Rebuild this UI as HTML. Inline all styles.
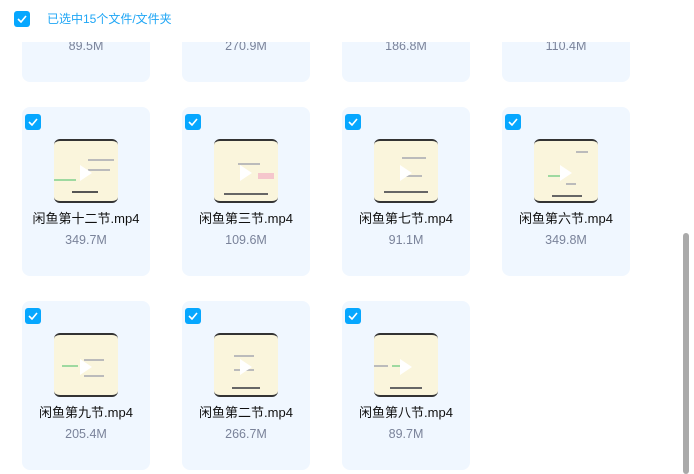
<!DOCTYPE html>
<html><head><meta charset="utf-8"><style>
*{margin:0;padding:0;box-sizing:border-box}
body{width:694px;height:474px;overflow:hidden;background:#fff;font-family:"Liberation Sans","Noto Sans CJK SC",sans-serif;position:relative}
.hdr{position:absolute;left:0;top:0;width:694px;height:42px;background:#fff;z-index:5}
.cb{position:absolute;width:16px;height:16px;border-radius:3px;background:#06a7ff}
.cb svg{position:absolute;left:3px;top:4px}
.htxt{position:absolute;left:47px;top:11px;font-size:12px;color:#1fa6f5;line-height:16px}
.card{position:absolute;width:128px;height:169px;background:#f0f7ff;border-radius:8px}
.card .cb{left:3px;top:7px}
.th{position:absolute;left:32px;top:32px;width:64px;height:64px;border-radius:6px;background:#faf5dc;overflow:hidden;border-top:2px solid #333;border-bottom:2px solid #333}
.th i{position:absolute;height:2px;background:#bbb}
.play{position:absolute;left:26px;top:24px;width:0;height:0;border-left:12px solid #fff;border-top:8px solid transparent;border-bottom:8px solid transparent}
.nm{position:absolute;left:0;width:128px;top:104px;text-align:center;font-size:13px;color:#111;line-height:16px}
.sz{position:absolute;left:0;width:128px;top:125px;text-align:center;font-size:12.5px;color:#7a839a;line-height:16px}
.sb{position:absolute;left:683px;top:233px;width:6px;height:241px;background:#aaa;border-radius:3px}
</style></head><body>
<div class="hdr"><div class="cb" style="left:14px;top:11px"><svg width="10" height="8"><path d="M1 4l3 3 5-6" stroke="#fff" stroke-width="1.6" fill="none"/></svg></div><div class="htxt">已选中15个文件/文件夹</div></div>

<div class="card" style="left:22px;top:-87px"><div class="sz">89.5M</div></div>
<div class="card" style="left:182px;top:-87px"><div class="sz">270.9M</div></div>
<div class="card" style="left:342px;top:-87px"><div class="sz">186.8M</div></div>
<div class="card" style="left:502px;top:-87px"><div class="sz">110.4M</div></div>

<div class="card" style="left:22px;top:107px"><div class="cb"><svg width="10" height="8"><path d="M1 4l3 3 5-6" stroke="#fff" stroke-width="1.6" fill="none"/></svg></div><div class="th"><i style="left:34px;top:18px;width:26px"></i><i style="left:34px;top:28px;width:22px"></i><i style="left:0;top:38px;width:22px;background:#9ed9a0"></i><i style="left:18px;top:50px;width:26px;background:#555"></i><div class="play"></div></div><div class="nm">闲鱼第十二节.mp4</div><div class="sz">349.7M</div></div>
<div class="card" style="left:182px;top:107px"><div class="cb"><svg width="10" height="8"><path d="M1 4l3 3 5-6" stroke="#fff" stroke-width="1.6" fill="none"/></svg></div><div class="th"><i style="left:24px;top:22px;width:22px"></i><i style="left:44px;top:32px;width:16px;height:6px;background:#f5c6cc"></i><i style="left:10px;top:52px;width:44px;background:#666"></i><div class="play"></div></div><div class="nm">闲鱼第三节.mp4</div><div class="sz">109.6M</div></div>
<div class="card" style="left:342px;top:107px"><div class="cb"><svg width="10" height="8"><path d="M1 4l3 3 5-6" stroke="#fff" stroke-width="1.6" fill="none"/></svg></div><div class="th"><i style="left:28px;top:16px;width:24px"></i><i style="left:28px;top:34px;width:20px"></i><i style="left:10px;top:50px;width:44px;background:#666"></i><div class="play"></div></div><div class="nm">闲鱼第七节.mp4</div><div class="sz">91.1M</div></div>
<div class="card" style="left:502px;top:107px"><div class="cb"><svg width="10" height="8"><path d="M1 4l3 3 5-6" stroke="#fff" stroke-width="1.6" fill="none"/></svg></div><div class="th"><i style="left:42px;top:10px;width:12px"></i><i style="left:14px;top:34px;width:12px;background:#9ed9a0"></i><i style="left:32px;top:42px;width:10px"></i><i style="left:18px;top:54px;width:30px;background:#666"></i><div class="play"></div></div><div class="nm">闲鱼第六节.mp4</div><div class="sz">349.8M</div></div>

<div class="card" style="left:22px;top:301px"><div class="cb"><svg width="10" height="8"><path d="M1 4l3 3 5-6" stroke="#fff" stroke-width="1.6" fill="none"/></svg></div><div class="th"><i style="left:8px;top:30px;width:16px;background:#9ed9a0"></i><i style="left:30px;top:24px;width:20px"></i><i style="left:30px;top:40px;width:20px"></i><div class="play"></div></div><div class="nm">闲鱼第九节.mp4</div><div class="sz">205.4M</div></div>
<div class="card" style="left:182px;top:301px"><div class="cb"><svg width="10" height="8"><path d="M1 4l3 3 5-6" stroke="#fff" stroke-width="1.6" fill="none"/></svg></div><div class="th"><i style="left:20px;top:20px;width:20px"></i><i style="left:20px;top:34px;width:20px"></i><i style="left:18px;top:52px;width:28px;background:#666"></i><div class="play"></div></div><div class="nm">闲鱼第二节.mp4</div><div class="sz">266.7M</div></div>
<div class="card" style="left:342px;top:301px"><div class="cb"><svg width="10" height="8"><path d="M1 4l3 3 5-6" stroke="#fff" stroke-width="1.6" fill="none"/></svg></div><div class="th"><i style="left:0;top:30px;width:14px"></i><i style="left:18px;top:30px;width:12px;background:#9ed9a0"></i><i style="left:16px;top:52px;width:32px;background:#666"></i><div class="play"></div></div><div class="nm">闲鱼第八节.mp4</div><div class="sz">89.7M</div></div>

<div class="sb"></div>
</body></html>
